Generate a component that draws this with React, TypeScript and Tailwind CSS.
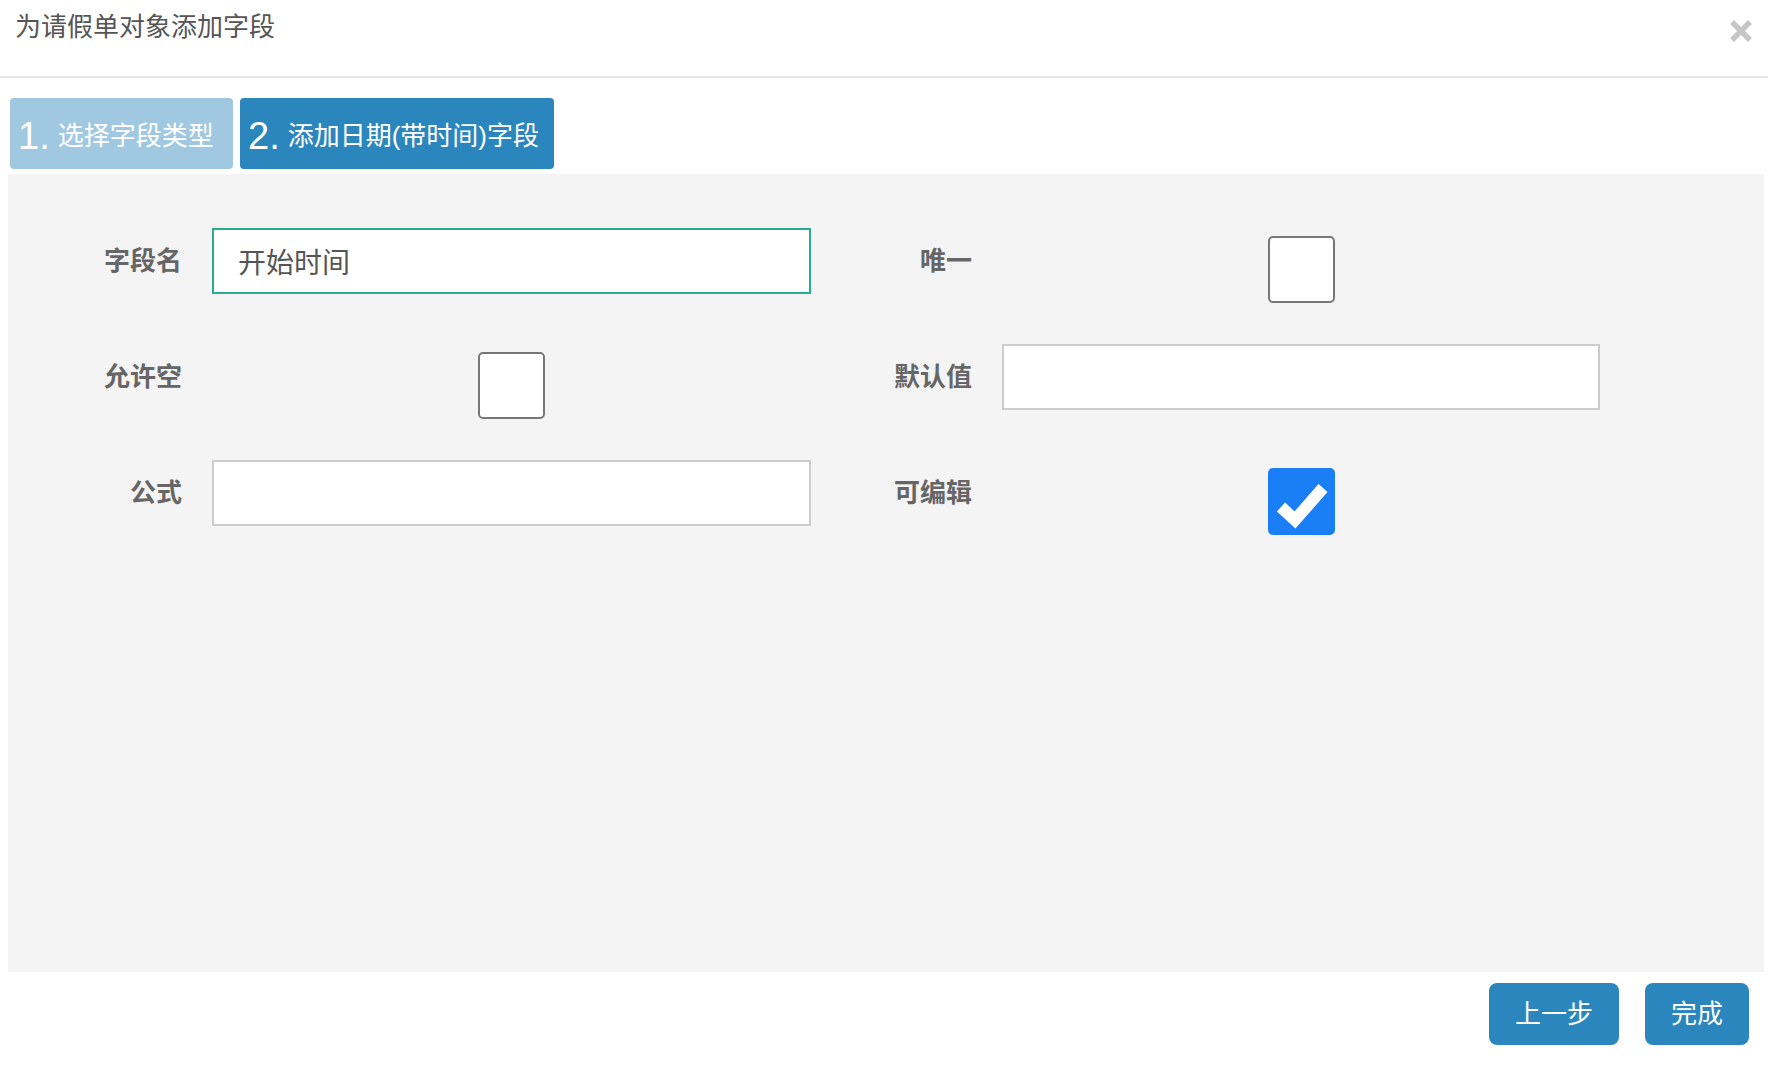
import React from 'react';

const FONT = "font-['Liberation_Sans','Noto_Sans_CJK_SC',sans-serif]";

function CheckBox({ checked = false }: { checked?: boolean }) {
  if (checked) {
    return (
      <span className="mt-[8px] flex h-[67px] w-[67px] items-center justify-center rounded-[5px] bg-[#1a7ef7]">
        <svg width="67" height="67" viewBox="0 0 67 67">
          <polyline points="13,39 27,52 55,20" fill="none" stroke="#ffffff" strokeWidth="12" strokeLinejoin="miter" />
        </svg>
      </span>
    );
  }
  return <span className="mt-[8px] block h-[67px] w-[67px] rounded-[5px] border-2 border-[#777777] bg-white" />;
}

function Label({ text, width }: { text: string; width: string }) {
  return (
    <div className={`${width} flex h-[66px] shrink-0 items-center justify-end text-[26px] font-bold text-[#666666]`}>
      {text}
    </div>
  );
}

function TextInput({ value = '', focused = false, width }: { value?: string; focused?: boolean; width: string }) {
  return (
    <input
      readOnly
      value={value}
      className={[
        width,
        'h-[66px] shrink-0 bg-white pl-[24px] text-[28px] text-[#555555] outline-none',
        focused ? 'border-2 border-[#2aab8e]' : 'border-2 border-[#cccccc]',
      ].join(' ')}
    />
  );
}

export default function App() {
  return (
    <div className={`${FONT} flex h-[1068px] w-[1768px] flex-col bg-white`}>
      {/* ── Header ───────────────────────── */}
      <div className="flex h-[78px] shrink-0 items-start justify-between border-b-2 border-[#e5e5e5] pl-[15px] pr-[16px]">
        <h1 className="pt-[8px] text-[26px] leading-[38px] font-normal text-[#555555]">为请假单对象添加字段</h1>
        <svg className="mt-[20px]" width="22" height="22" viewBox="0 0 22 22">
          <path d="M2 2 L20 20 M20 2 L2 20" stroke="#c6c6c6" strokeWidth="5.5" />
        </svg>
      </div>

      {/* ── Step tabs ────────────────────── */}
      <div className="mt-[20px] flex gap-[7px] pl-[10px]">
        <div className="flex h-[71px] w-[223px] items-center rounded-[4px] bg-[#a0c8e1] pl-[8px] pt-[5px] leading-none text-white">
          <span className="text-[38px]">1.</span>
          <span className="ml-[8px] text-[26px]">选择字段类型</span>
        </div>
        <div className="flex h-[71px] w-[314px] items-center rounded-[4px] bg-[#2b86bd] pl-[8px] pt-[5px] leading-none text-white">
          <span className="text-[38px]">2.</span>
          <span className="ml-[8px] text-[26px]">添加日期(带时间)字段</span>
        </div>
      </div>

      {/* ── Form panel ───────────────────── */}
      <div className="ml-[8px] mr-[4px] mt-[5px] flex h-[798px] flex-col gap-[50px] bg-[#f4f4f4] pt-[54px]">
        <div className="flex h-[66px] items-start">
          <Label text="字段名" width="w-[174px]" />
          <div className="ml-[30px] flex w-[599px] justify-start">
            <TextInput value="开始时间" focused width="w-[599px]" />
          </div>
          <Label text="唯一" width="w-[161px]" />
          <div className="ml-[30px] flex w-[598px] justify-center">
            <CheckBox />
          </div>
        </div>

        <div className="flex h-[66px] items-start">
          <Label text="允许空" width="w-[174px]" />
          <div className="ml-[30px] flex w-[599px] justify-center">
            <CheckBox />
          </div>
          <Label text="默认值" width="w-[161px]" />
          <div className="ml-[30px] flex w-[598px]">
            <TextInput width="w-[598px]" />
          </div>
        </div>

        <div className="flex h-[66px] items-start">
          <Label text="公式" width="w-[174px]" />
          <div className="ml-[30px] flex w-[599px]">
            <TextInput width="w-[599px]" />
          </div>
          <Label text="可编辑" width="w-[161px]" />
          <div className="ml-[30px] flex w-[598px] justify-center">
            <CheckBox checked />
          </div>
        </div>
      </div>

      {/* ── Footer buttons ───────────────── */}
      <div className="mt-[11px] flex justify-end gap-[26px] pr-[19px]">
        <button className="h-[62px] rounded-[8px] bg-[#2b86bd] px-[26px] text-[26px] text-white">上一步</button>
        <button className="h-[62px] rounded-[8px] bg-[#2b86bd] px-[26px] text-[26px] text-white">完成</button>
      </div>
    </div>
  );
}
